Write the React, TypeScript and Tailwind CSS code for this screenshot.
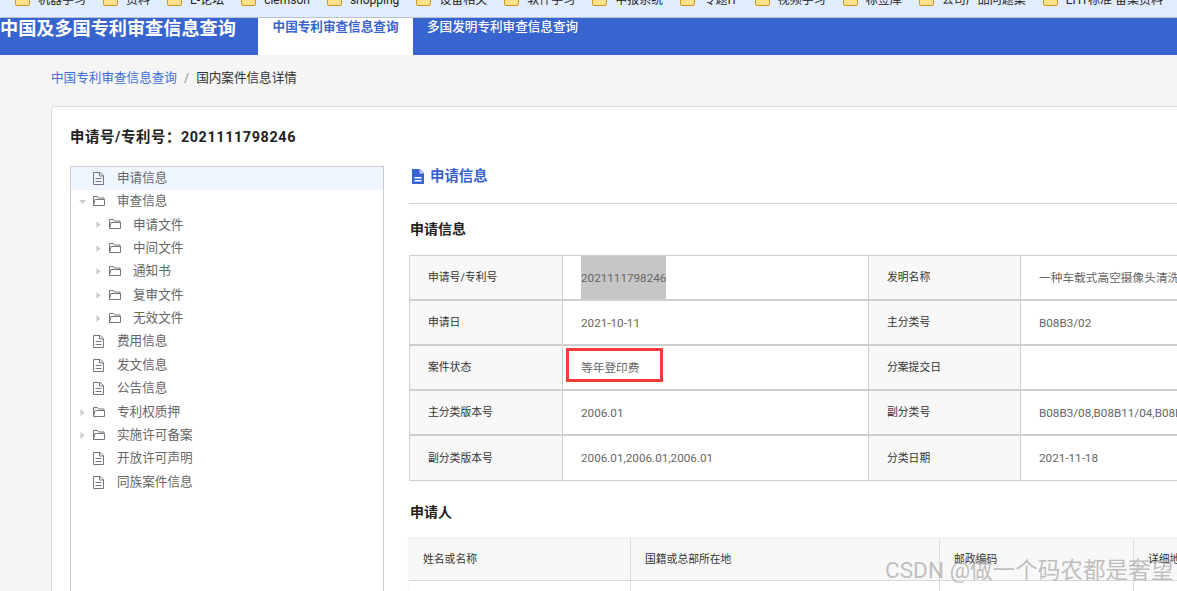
import React from 'react'

const bookmarks = [
  '机器学习',
  '资料',
  'E-论坛',
  'clemson',
  'shopping',
  '设备相关',
  '软件学习',
  '申报系统',
  '专题IT',
  '视频学习',
  '标签库',
  '公司产品问题集',
  'EHT标准 备案资料',
  '其他',
]

type TreeRow = {
  label: string
  kind: 'file' | 'folder'
  level?: number
  arrow?: 'right' | 'down'
  active?: boolean
}

const treeRows: TreeRow[] = [
  { label: '申请信息', kind: 'file', active: true },
  { label: '审查信息', kind: 'folder', arrow: 'down' },
  { label: '申请文件', kind: 'folder', level: 1, arrow: 'right' },
  { label: '中间文件', kind: 'folder', level: 1, arrow: 'right' },
  { label: '通知书', kind: 'folder', level: 1, arrow: 'right' },
  { label: '复审文件', kind: 'folder', level: 1, arrow: 'right' },
  { label: '无效文件', kind: 'folder', level: 1, arrow: 'right' },
  { label: '费用信息', kind: 'file' },
  { label: '发文信息', kind: 'file' },
  { label: '公告信息', kind: 'file' },
  { label: '专利权质押', kind: 'folder', arrow: 'right' },
  { label: '实施许可备案', kind: 'folder', arrow: 'right' },
  { label: '开放许可声明', kind: 'file' },
  { label: '同族案件信息', kind: 'file' },
]

const infoRows = [
  ['申请号/专利号', '2021111798246', '发明名称', '一种车载式高空摄像头清洗装置'],
  ['申请日', '2021-10-11', '主分类号', 'B08B3/02'],
  ['案件状态', '等年登印费', '分案提交日', ''],
  ['主分类版本号', '2006.01', '副分类号', 'B08B3/08,B08B11/04,B08B13/00'],
  ['副分类版本号', '2006.01,2006.01,2006.01', '分类日期', '2021-11-18'],
]

const FileIcon = () => (
  <svg width="11" height="13" viewBox="0 0 11 13" fill="none" stroke="#74777d" strokeWidth="1">
    <path d="M.5 .5h6.5l3.500 3v9h-10z" />
    <path d="M6.500 .5v3.500h4M2.500 6.500h6M2.500 9.500h6" />
  </svg>
)

const FolderIcon = () => (
  <svg width="12" height="11" viewBox="0 0 12 11" fill="none" stroke="#74777d" strokeWidth="1">
    <path d="M.5 9.500v-9h4l1 1.500h5.500v1.500" />
    <path d="M.5 9.500l1.500-6h9.500v6z" />
  </svg>
)

const Arrow = ({ dir }: { dir: 'right' | 'down' }) => (
  <svg width="7" height="7" viewBox="0 0 7 7" fill="#c8cbd2">
    {dir === 'right' ? <path d="M1.500 0l4 3.500-4 3.500z" /> : <path d="M0 2h7l-3.500 4z" />}
  </svg>
)

const Tree = () => (
  <div className="w-[314px] shrink-0 h-[480px] border border-[#c9ccd1] bg-white">
    {treeRows.map((row) => (
      <div
        key={row.label}
        className={`flex h-[23.4px] items-center pb-[1px] ${row.active ? 'bg-[#f0f6fe]' : ''}`}
      >
        <div className={`flex items-center ${row.level ? 'w-[62px]' : 'w-[46px]'} shrink-0 justify-end`}>
          <span className="w-[7px] mr-[7px] flex">{row.arrow && <Arrow dir={row.arrow} />}</span>
          <span className="flex w-[13px] mr-[11px]">
            {row.kind === 'file' ? <FileIcon /> : <FolderIcon />}
          </span>
        </div>
        <span className="text-[12.6px] text-[#666] whitespace-nowrap">{row.label}</span>
      </div>
    ))}
  </div>
)

const InfoTable = () => (
  <div className="w-[900px] grid grid-cols-[153px_306px_152px_1fr] border-t border-l border-[#cfcfcf]">
    {infoRows.map((row, i) => {
      const last = i === infoRows.length - 1
      const rowLine = last ? 'h-[45px] border-b' : 'h-[45px] border-b-2'
      return (
        <React.Fragment key={row[0]}>
          <div className={`${rowLine} border-r border-[#cfcfcf] bg-[#f8f8f8] flex items-center pl-[18px] pt-[2px] text-[10.8px] text-[#333]`}>
            {row[0]}
          </div>
          <div className={`${rowLine} border-r border-[#cfcfcf] flex items-center pl-[18px] text-[11.7px] text-[#666]`}>
            {i === 0 ? (
              <span className="h-full flex items-center pt-[2px] bg-[#c6c6c6]">{row[1]}</span>
            ) : (
              <span className="pt-[2px]">{row[1]}</span>
            )}
          </div>
          <div className={`${rowLine} border-r border-[#cfcfcf] bg-[#f8f8f8] flex items-center pl-[18px] pt-[2px] text-[10.8px] text-[#333]`}>
            {row[2]}
          </div>
          <div className={`${rowLine} border-[#cfcfcf] flex items-center pl-[18px] pt-[2px] text-[11.7px] text-[#666] whitespace-nowrap`}>
            {row[3]}
          </div>
        </React.Fragment>
      )
    })}
  </div>
)

const ApplicantTable = () => (
  <div className="w-[900px] border-t border-[#ebebeb] shadow-[0_0_3px_rgba(0,0,0,0.08)]">
    <div className="grid grid-cols-[222px_309px_194px_1fr] h-[42px] border-b border-[#d8d8d8] bg-[#f8f8f8] text-[10.8px] text-[#333]">
      <div className="flex items-center pl-[14px] pt-[1px] border-r border-[#dcdcdc]">姓名或名称</div>
      <div className="flex items-center pl-[14px] pt-[1px] border-r border-[#dcdcdc]">国籍或总部所在地</div>
      <div className="flex items-center pl-[14px] pt-[1px] border-r border-[#dcdcdc]">邮政编码</div>
      <div className="flex items-center pl-[14px] pt-[1px]">详细地址</div>
    </div>
    <div className="grid grid-cols-[222px_309px_194px_1fr] h-[40px]">
      <div className="border-r border-[#dcdcdc]" />
      <div className="border-r border-[#dcdcdc]" />
      <div className="border-r border-[#dcdcdc]" />
      <div />
    </div>
  </div>
)

export default function App() {
  return (
    <div className="relative h-[591px] w-[1177px] overflow-hidden bg-[#f5f5f5] font-['Roboto','Noto_Sans_CJK_SC',sans-serif]">
      {/* browser bookmarks, cut off by the top of the capture */}
      <div className="h-[18px] overflow-hidden border-b border-[#b8c3d2] bg-[#e1edfe] pl-[15px]">
        <div className="-mt-[8px] flex gap-[17px] whitespace-nowrap text-[12px] leading-[16px] text-[#222]">
          {bookmarks.map((name) => (
            <div key={name} className="flex shrink-0">
              <span className="mr-[8px] h-[14px] w-[15px] rounded-[2px] border border-[#c8961e] bg-[#ffe08a]" />
              {name}
            </div>
          ))}
        </div>
      </div>

      <header className="flex h-[37px] items-start bg-[#3864d0]">
        <div className="w-[258px] shrink-0 text-[18.15px] leading-[21px] font-bold text-white whitespace-nowrap">
          中国及多国专利审查信息查询
        </div>
        <div className="flex h-full w-[155px] justify-center bg-white pt-[1px] text-[12.6px] leading-[15px] font-bold text-[#3864d0]">
          中国专利审查信息查询
        </div>
        <div className="pl-[14px] pt-[1px] text-[12.6px] leading-[15px] font-medium text-white">
          多国发明专利审查信息查询
        </div>
      </header>

      <nav className="flex h-[51px] items-start pl-[51px] pt-[15px] text-[12.6px] leading-[16px]">
        <span className="text-[#3f6fd6]">中国专利审查信息查询</span>
        <span className="mx-[7px] text-[#8a8a8a]">/</span>
        <span className="text-[#333]">国内案件信息详情</span>
      </nav>

      <main className="ml-[51px] w-[1300px] rounded-t-[4px] border border-[#dcdcdc] bg-white pl-[18px] pt-[21px]">
        <h1 className="h-[38px] text-[14.4px] tracking-[0.6px] leading-[20px] font-bold text-[#222]">
          申请号/专利号：2021111798246
        </h1>
        <div className="flex">
          <Tree />
          <section className="ml-[25px] w-[900px]">
            <div className="flex h-[40px] items-center border-b border-[#d0d0d0] pb-[14px] -mt-[2px] mb-[15px] w-[800px]">
              <svg width="14" height="15" viewBox="0 0 14 15" className="ml-[2px] mr-[5px]">
                <path d="M1 0h8l4 4v11H1z" fill="#3864d0" />
                <path d="M8.500 0v4.500H13" fill="#ffffff" opacity="0.7" />
                <path d="M3.500 8h7v1.400h-7zM3.500 11h7v1.400h-7z" fill="#ffffff" />
              </svg>
              <span className="text-[14.4px] font-bold text-[#3864d0]">申请信息</span>
            </div>
            <h2 className="ml-px mb-[16px] text-[14px] leading-[20px] font-bold text-[#222]">申请信息</h2>
            <InfoTable />
            <h2 className="ml-px mt-[21px] mb-[16px] text-[14px] leading-[20px] font-bold text-[#222]">申请人</h2>
            <ApplicantTable />
          </section>
        </div>
      </main>

      {/* annotation drawn over the screenshot */}
      <div className="absolute left-[566px] top-[348px] h-[34px] w-[97px] border-[3px] border-[#f63a3a]" />
      <div className="absolute left-[885px] top-[556px] whitespace-nowrap text-[22.6px] leading-[30px] text-[#a5a5a5]/70">
        CSDN @做一个码农都是奢望
      </div>
    </div>
  )
}
